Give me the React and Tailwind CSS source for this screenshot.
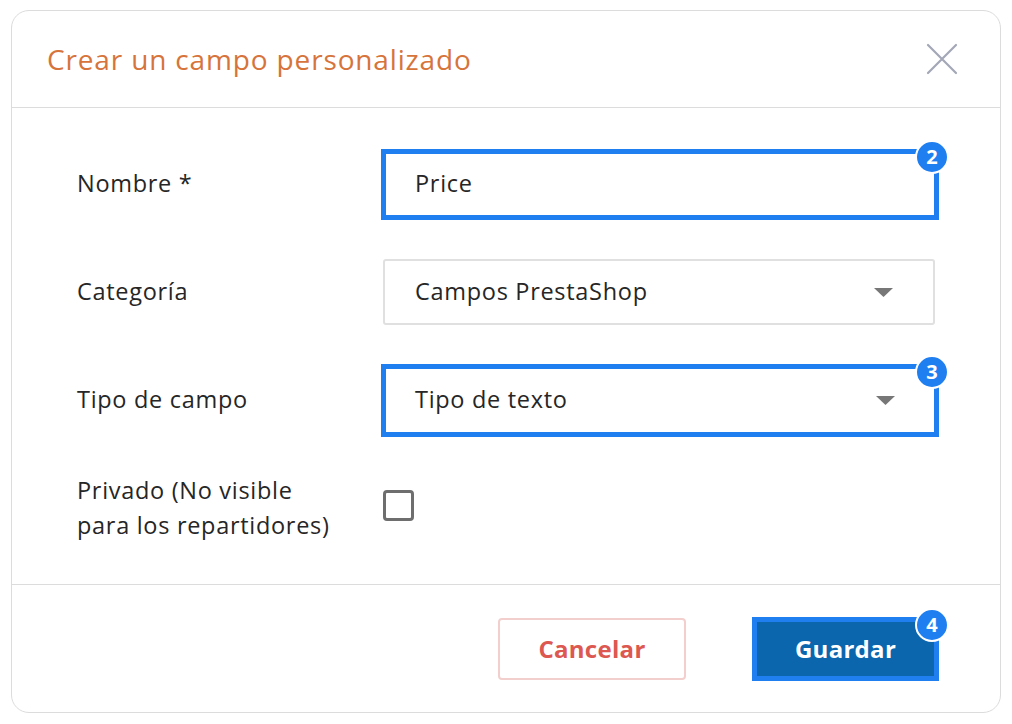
import React from "react";

function Badge({ n }) {
  return (
    <div className="absolute -right-[15px] -top-[14px] w-[34px] h-[34px] rounded-full bg-[#1f7ff0] border-2 border-white flex items-center justify-center text-white text-[20px] font-bold leading-none tracking-normal">
      {n}
    </div>
  );
}

function Caret() {
  return (
    <svg width="19" height="9" viewBox="0 0 19 9" className="shrink-0">
      <path d="M0 0 H19 L9.5 9 Z" fill="#777" />
    </svg>
  );
}

export default function App() {
  const font = { fontFamily: '"Open Sans", "Noto Sans", sans-serif' };
  return (
    <div className="w-[1012px] h-[724px] bg-white pt-[10px] pl-[11px]" style={font}>
      <div className="w-[990px] h-[703px] border border-[#dcdcdc] rounded-[18px] flex flex-col bg-white">
        {/* Header */}
        <div className="h-[97px] shrink-0 flex items-center justify-between pl-[35px] pr-[42px] border-b border-[#dcdcdc]">
          <div className="text-[28px] text-[#d6743c] tracking-[0.85px]">Crear un campo personalizado</div>
          <svg width="32" height="32" viewBox="0 0 32 32">
            <path d="M2 2 L30 30 M30 2 L2 30" stroke="#a3a7b6" strokeWidth="2.2" strokeLinecap="round" />
          </svg>
        </div>

        {/* Body */}
        <div className="flex-1 px-[65px] pt-[22px] flex flex-col text-[#262626] text-[23.5px] tracking-[0.7px]">
          <div className="h-[108px] flex items-center">
            <div className="w-[306px] shrink-0">Nombre *</div>
            <div className="relative shrink-0 -ml-[2px] w-[558px] h-[71px] border-[5px] border-[#1f7ff0] flex items-center pl-[29px]">
              Price
              <Badge n="2" />
            </div>
          </div>
          <div className="h-[108px] flex items-center">
            <div className="w-[306px] shrink-0">Categoría</div>
            <div className="shrink-0 w-[552px] h-[66px] border-2 border-[#e0e0e0] rounded-[3px] flex items-center justify-between pl-[30px] pr-[40px]">
              <span>Campos PrestaShop</span>
              <Caret />
            </div>
          </div>
          <div className="h-[108px] flex items-center">
            <div className="w-[306px] shrink-0">Tipo de campo</div>
            <div className="relative shrink-0 -ml-[2px] w-[558px] h-[73px] border-[5px] border-[#1f7ff0] flex items-center justify-between pl-[29px] pr-[39px]">
              <span>Tipo de texto</span>
              <Caret />
              <Badge n="3" />
            </div>
          </div>
          <div className="h-[110px] flex items-center">
            <div className="w-[306px] shrink-0 leading-[35px] pb-[3px]">
              Privado (No visible
              <br />
              para los repartidores)
            </div>
            <div className="shrink-0 w-[31px] h-[31px] border-[3px] border-[#6e6e6e] rounded-[4px] -mt-[7px]"></div>
          </div>
        </div>

        {/* Footer */}
        <div className="h-[128px] shrink-0 border-t border-[#dcdcdc] flex items-center justify-end pr-[61px] gap-[66px]">
          <button className="w-[188px] h-[62px] border-2 border-[#f2cfcc] rounded-[4px] text-[#dc5850] text-[24px] font-bold bg-white tracking-[0.3px]">
            Cancelar
          </button>
          <div className="relative w-[187px] h-[64px] border-[5px] border-[#1f7ff0] bg-[#0b66ae] flex items-center justify-center text-white text-[24px] font-bold tracking-[0.3px]">
            Guardar
            <Badge n="4" />
          </div>
        </div>
      </div>
    </div>
  );
}
